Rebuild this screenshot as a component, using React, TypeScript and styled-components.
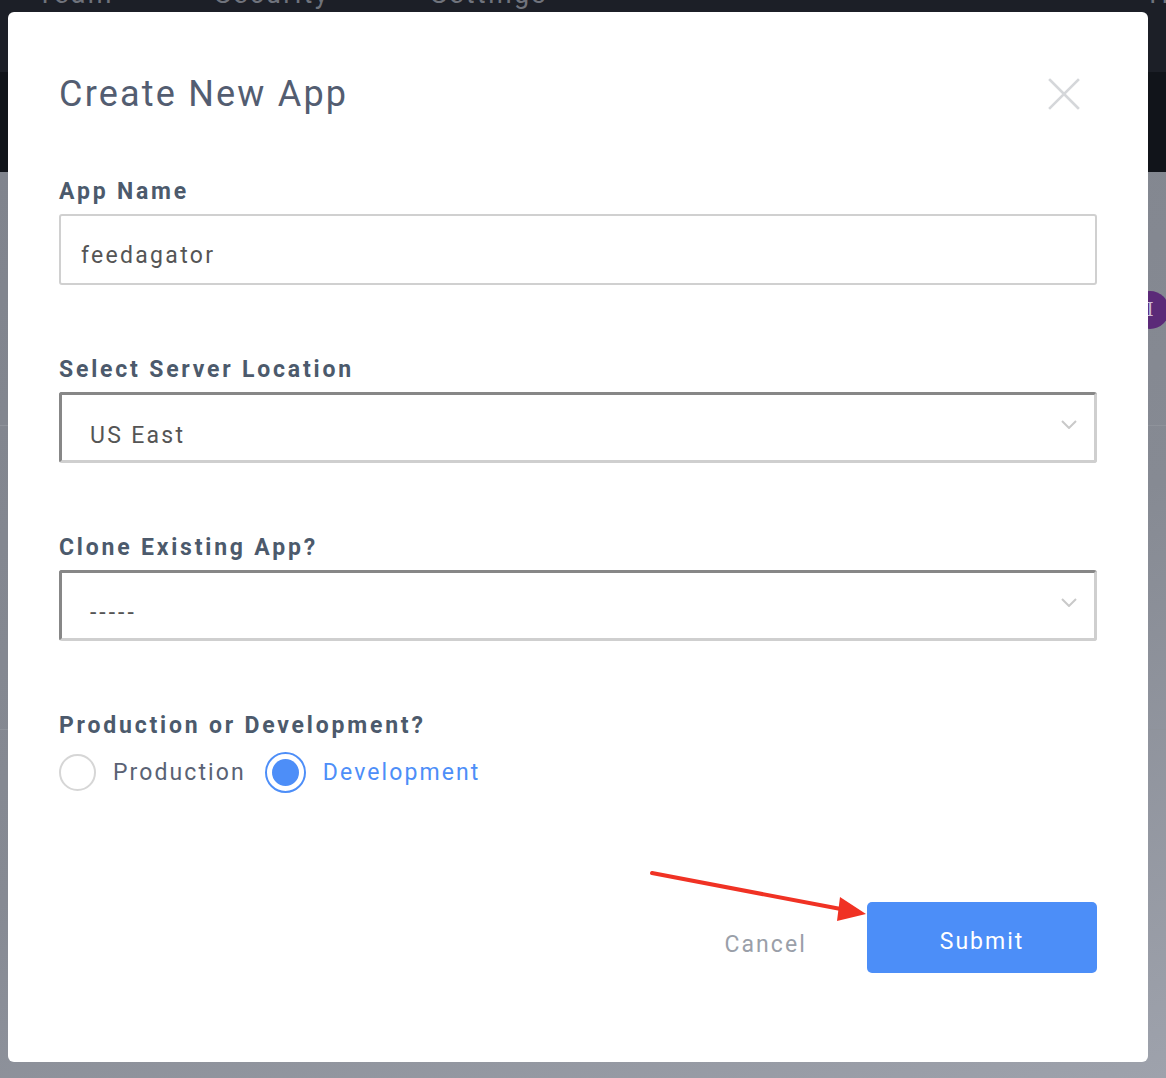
import React from "react";
import styled, { createGlobalStyle } from "styled-components";

const GlobalStyle = createGlobalStyle`
  html, body {
    margin: 0;
    padding: 0;
    background: #1c1f27;
  }
  body {
    font-family: Roboto, "Noto Sans", "Liberation Sans", sans-serif;
  }
  * { box-sizing: border-box; }
`;

const Page = styled.div`
  position: relative;
  width: 1166px;
  height: 1078px;
  overflow: hidden;
  display: flex;
  flex-direction: column;
`;

const TopNav = styled.nav`
  height: 72px;
  background: #1c1f27;
  display: flex;
  align-items: flex-start;
  padding-left: 37px;
  gap: 101px;
`;

const NavItem = styled.span<{ $push?: boolean }>`
  margin-top: -24px;
  font-size: 27px;
  letter-spacing: 2.3px;
  color: #6f737c;
  line-height: 36px;
  ${(p) => (p.$push ? "margin-left: auto; margin-right: -20px;" : "")}
`;

const SubHeader = styled.div`
  height: 100px;
  background: #11141a;
`;

const Content = styled.div`
  flex: 1;
  background: linear-gradient(160deg, #80848d 0%, #868a93 55%, #9ea2ac 100%);
  display: flex;
  flex-direction: column;
`;

const ContentRow = styled.div<{ $h: number }>`
  height: ${(p) => p.$h}px;
  border-bottom: 1px solid #8f939b;
  display: flex;
  align-items: center;
  justify-content: flex-end;
`;

const Avatar = styled.div`
  width: 38px;
  height: 38px;
  border-radius: 50%;
  background: #5b2a78;
  margin-right: -3px;
  margin-top: 22px;
  color: #cdbcd8;
  font-size: 18px;
  font-family: "DejaVu Serif", serif;
  display: flex;
  align-items: center;
  justify-content: center;
`;

/* ---------- modal ---------- */
const Overlay = styled.div`
  position: absolute;
  inset: 0;
  padding: 12px 0 0 8px;
`;

const Modal = styled.div`
  width: 1140px;
  height: 1050px;
  background: #ffffff;
  border-radius: 6px;
  padding: 52px 51px 0 51px;
  display: flex;
  flex-direction: column;
`;

const Header = styled.div`
  height: 60px;
  display: flex;
  align-items: center;
  justify-content: space-between;
`;

const Title = styled.h2`
  margin: 0;
  font-size: 36px;
  font-weight: 400;
  letter-spacing: 2.2px;
  color: #535d71;
`;

const CloseButton = styled.button`
  width: 32px;
  height: 32px;
  margin-right: 17px;
  padding: 0;
  border: none;
  background: transparent;
  display: flex;
  align-items: center;
  justify-content: center;
`;

const Form = styled.div`
  margin-top: 52px;
  display: flex;
  flex-direction: column;
  gap: 69px;
`;

const Field = styled.div`
  display: flex;
  flex-direction: column;
`;

const Label = styled.label<{ $gap?: number }>`
  height: 30px;
  display: flex;
  align-items: center;
  margin-bottom: ${(p) => p.$gap ?? 8}px;
  font-size: 23px;
  font-weight: 700;
  letter-spacing: 2.8px;
  color: #4c5a6c;
`;

const TextInput = styled.input`
  height: 71px;
  width: 100%;
  border: 2px solid #d0d0d0;
  border-radius: 3px;
  padding: 12px 20px 0 20px;
  font-family: inherit;
  font-size: 23px;
  letter-spacing: 2.3px;
  color: #555;
  outline: none;
  background: #fff;
`;

const SelectBox = styled.div`
  height: 71px;
  border-style: solid;
  border-width: 3px;
  border-color: #878787 #cfcfcf #cfcfcf #878787;
  border-radius: 3px;
  padding: 16px 17px 0 28px;
  display: flex;
  align-items: center;
  justify-content: space-between;
  font-size: 23px;
  letter-spacing: 2.3px;
  color: #555;
`;

const SelectValue = styled.span<{ $spread?: boolean }>`
  letter-spacing: ${(p) => (p.$spread ? "3px" : "inherit")};
  margin-top: ${(p) => (p.$spread ? "-2px" : "0")};
`;

const Chevron = styled.svg`
  margin-top: -22px;
`;

const RadioRow = styled.div`
  height: 41px;
  display: flex;
  align-items: center;
`;

const RadioOption = styled.div<{ $checked?: boolean }>`
  display: flex;
  align-items: center;
  gap: 17px;
  margin-right: 19px;
  font-size: 23px;
  letter-spacing: 2.1px;
  color: ${(p) => (p.$checked ? "#4d8ef8" : "#5a6274")};
`;

const RadioCircle = styled.span<{ $checked?: boolean }>`
  width: ${(p) => (p.$checked ? 41 : 37)}px;
  height: ${(p) => (p.$checked ? 41 : 37)}px;
  border-radius: 50%;
  border: 2px solid ${(p) => (p.$checked ? "#4d8ef8" : "#d6d6d6")};
  background: #fff;
  display: flex;
  align-items: center;
  justify-content: center;
  &::after {
    content: "";
    display: ${(p) => (p.$checked ? "block" : "none")};
    width: 27px;
    height: 27px;
    border-radius: 50%;
    background: #4d8ef8;
  }
`;

const Footer = styled.div`
  margin-top: 109px;
  display: flex;
  justify-content: flex-end;
  align-items: center;
  gap: 40px;
`;

const CancelButton = styled.button`
  height: 71px;
  padding: 14px 20px 0 20px;
  border: none;
  background: transparent;
  font-family: inherit;
  font-size: 23px;
  letter-spacing: 2.1px;
  color: #9a9fa9;
`;

const SubmitButton = styled.button`
  width: 230px;
  height: 71px;
  padding-top: 9px;
  border: none;
  border-radius: 5px;
  background: #4c8ef8;
  color: #ffffff;
  font-family: inherit;
  font-size: 23px;
  letter-spacing: 2px;
`;

const Annotation = styled.svg`
  position: absolute;
  left: 648px;
  top: 865px;
  pointer-events: none;
`;

export default function App() {
  return (
    <>
      <GlobalStyle />
      <Page>
        <TopNav>
          <NavItem>Team</NavItem>
          <NavItem>Security</NavItem>
          <NavItem>Settings</NavItem>
          <NavItem $push>Hy</NavItem>
        </TopNav>
        <SubHeader />
        <Content>
          <ContentRow $h={254}>
            <Avatar>I</Avatar>
          </ContentRow>
          <ContentRow $h={304} />
        </Content>

        <Overlay>
          <Modal>
            <Header>
              <Title>Create New App</Title>
              <CloseButton aria-label="Close">
                <svg width="32" height="32" viewBox="0 0 32 32">
                  <path
                    d="M2 2 L30 30 M30 2 L2 30"
                    stroke="#d5d7da"
                    strokeWidth="2.6"
                    strokeLinecap="square"
                    fill="none"
                  />
                </svg>
              </CloseButton>
            </Header>

            <Form>
              <Field>
                <Label>App Name</Label>
                <TextInput defaultValue="feedagator" />
              </Field>

              <Field>
                <Label>Select Server Location</Label>
                <SelectBox>
                  <SelectValue>US East</SelectValue>
                  <Chevron width="16" height="9" viewBox="0 0 16 9">
                    <path d="M1 1 L8 8 L15 1" stroke="#c9c9c9" strokeWidth="2" fill="none" />
                  </Chevron>
                </SelectBox>
              </Field>

              <Field>
                <Label>Clone Existing App?</Label>
                <SelectBox>
                  <SelectValue $spread>-----</SelectValue>
                  <Chevron width="16" height="9" viewBox="0 0 16 9">
                    <path d="M1 1 L8 8 L15 1" stroke="#c9c9c9" strokeWidth="2" fill="none" />
                  </Chevron>
                </SelectBox>
              </Field>

              <Field>
                <Label $gap={12}>Production or Development?</Label>
                <RadioRow>
                  <RadioOption>
                    <RadioCircle />
                    Production
                  </RadioOption>
                  <RadioOption $checked>
                    <RadioCircle $checked />
                    Development
                  </RadioOption>
                </RadioRow>
              </Field>
            </Form>

            <Footer>
              <CancelButton>Cancel</CancelButton>
              <SubmitButton>Submit</SubmitButton>
            </Footer>
          </Modal>
        </Overlay>

        <Annotation width="225" height="62" viewBox="0 0 225 62">
          <line x1="4" y1="8" x2="198" y2="45" stroke="#f03224" strokeWidth="4" strokeLinecap="round" />
          <polygon points="192,32 218,49 189,56" fill="#f03224" />
        </Annotation>
      </Page>
    </>
  );
}
